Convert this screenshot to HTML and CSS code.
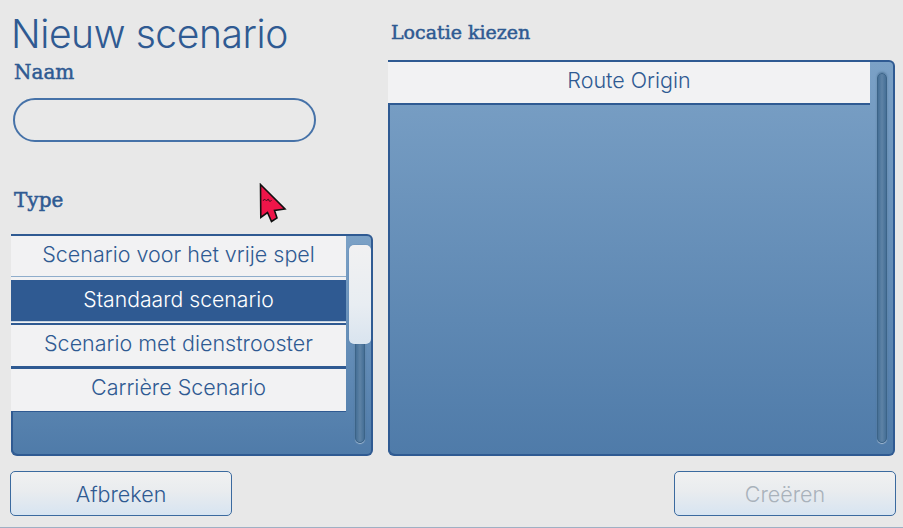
FILE: index.html
```html
<!DOCTYPE html>
<html lang="nl">
<head>
<meta charset="utf-8">
<title>Nieuw scenario</title>
<link rel="stylesheet" href="styles.css">
</head>
<body>
<div class="app">
  <main class="columns">
    <section class="col-left">
      <h1 class="title">Nieuw scenario</h1>
      <div class="label label-name">Naam</div>
      <div class="input"></div>
      <div class="label label-type">Type</div>
      <div class="list list-type">
        <ul class="items">
          <li class="item item-first">Scenario voor het vrije spel</li>
          <li class="item item-selected">Standaard scenario</li>
          <li class="item item-third">Scenario met dienstrooster</li>
          <li class="item item-last">Carrière Scenario</li>
        </ul>
        <div class="scrollbar">
          <div class="groove"></div>
          <div class="thumb"></div>
        </div>
      </div>
    </section>
    <section class="col-right">
      <div class="label label-loc">Locatie kiezen</div>
      <div class="list list-loc">
        <ul class="items">
          <li class="item item-only">Route Origin</li>
        </ul>
        <div class="scrollbar">
          <div class="groove"></div>
        </div>
      </div>
    </section>
  </main>
  <footer class="footer">
    <button class="btn">Afbreken</button>
    <button class="btn btn-disabled">Creëren</button>
  </footer>
  <svg class="cursor" width="30" height="42" viewBox="0 0 30 42">
    <path d="M1.500 1.500 L26 26 L15.500 27.500 L18 35 L12.500 38.500 L8.500 29.500 L1.800 34.500 Z" fill="#ee1549" stroke="#111" stroke-width="1.600" stroke-linejoin="miter"/>
    <path d="M4 18 q1-3 2.500-1 t2.500-1 q1 0 1 2 q2 1 2.500-1" fill="none" stroke="#4a1020" stroke-width="1"/>
  </svg>
</div>
</body>
</html>
```
FILE: styles.css
```css
* { box-sizing: border-box; }
html, body { margin: 0; padding: 0; }
body { width: 903px; height: 528px; overflow: hidden; background: #e8e8e8; }

.app {
  position: relative;
  width: 903px;
  height: 528px;
  padding: 0 8px 0 11px;
  border-bottom: 1px solid #9fb0c4;
  font-family: "Inter", "Open Sans", sans-serif;
  color: #2f5a92;
}

.columns {
  display: grid;
  grid-template-columns: 362px 507px;
  column-gap: 15px;
  height: 456px;
}
.col-left, .col-right { display: flex; flex-direction: column; min-height: 0; }

.title {
  margin: 0;
  height: 58px;
  padding-top: 10px;
  font-size: 39px;
  line-height: 48px;
  font-weight: 300;
  letter-spacing: -0.4px;
  color: #2f5a92;
  white-space: nowrap;
}

.label {
  font-family: "DejaVu Serif", serif;
  font-weight: 400;
  color: #2f5a92;
  -webkit-text-stroke: 0.5px #2f5a92;
  line-height: 26px;
  padding-left: 3px;
}
.label-name { height: 40px; padding-top: 1px; font-size: 20px; }
.label-type { margin-top: 45px; height: 47px; font-size: 20px; }
.label-loc { height: 60px; padding-left: 3px; padding-top: 19px; font-size: 19px; }

.input {
  width: 303px;
  height: 45px;
  margin-left: 2px;
  border: 2px solid #4672a8;
  border-radius: 22px;
  background: #e9e9e9;
}

.list {
  position: relative;
  flex: 1;
  display: flex;
  min-height: 0;
  padding: 0;
  border: 2px solid #2f5a92;
  border-left-width: 0;
  border-radius: 0 6px 6px 6px;
  background: linear-gradient(180deg, #7ba1c6 0%, #4f7ba9 100%);
  box-shadow: inset 2px 0 0 #2f5a92;
}
.list-type { height: 222px; flex: none; }

.items {
  flex: 1;
  list-style: none;
  margin: 0;
  padding: 0;
}
.item {
  text-align: center;
  background: #f2f2f3;
  color: #2f5a92;
  font-size: 21.500px;
  font-weight: 300;
  line-height: 37px;
  white-space: nowrap;
}
.item-first { height: 41px; border-bottom: 1px solid #8fadcb; box-shadow: 0 3px 0 #f2f2f3; margin-bottom: 3px; }
.item-selected { height: 41px; background: #2f5a92; color: #fff; font-size: 21.200px; line-height: 39px; box-shadow: 0 1px 0 #c4d3e2, 0 2px 0 #f2f2f3; margin-bottom: 4px; }
.item-third { height: 41px; margin-bottom: 3px; box-shadow: 0 -2px 0 #2f5a92, 0 3px 0 #2f5a92; }
.item-last { height: 42px; box-shadow: 0 1px 0 #2f5a92; }
.item-only { height: 41px; box-shadow: 0 2px 0 #2f5a92; }

.scrollbar {
  position: relative;
  flex: none;
  width: 25px;
  padding: 11px 6px 11px 9px;
  height: 100%;
}
.groove {
  width: 10px;
  height: 100%;
  border: 1px solid #3c6488;
  border-radius: 5px;
  background: linear-gradient(90deg, #456f96, #5e83a6 50%, #456f96);
  box-shadow: 0 -1px 2px rgba(50, 85, 120, 0.5), 0 1px 1px #a9c0d6;
}
.thumb {
  position: absolute;
  left: 3px;
  top: 9px;
  width: 22px;
  height: 99px;
  border-radius: 5px;
  background: linear-gradient(180deg, #f1f1f2 0%, #e8edf2 60%, #d9e4ef 100%);
  box-shadow: 0 0 1px #3f6a9b;
}
.list-loc .scrollbar { width: 23px; padding-left: 7px; }

.footer {
  display: flex;
  justify-content: space-between;
  margin: 15px -1px 0 -1px;
}
.btn {
  width: 222px;
  height: 45px;
  padding: 1px 0 0;
  border: 1px solid #3b6a9f;
  border-radius: 5px;
  background: linear-gradient(180deg, #f1f1f1 0%, #e9ecef 45%, #d7e4f1 100%);
  color: #2f5a92;
  font-family: "Inter", "Open Sans", sans-serif;
  font-size: 21.500px;
  font-weight: 300;
}
.btn-disabled { color: #a9b2bb; }

.cursor { position: absolute; left: 259px; top: 183px; }
```
